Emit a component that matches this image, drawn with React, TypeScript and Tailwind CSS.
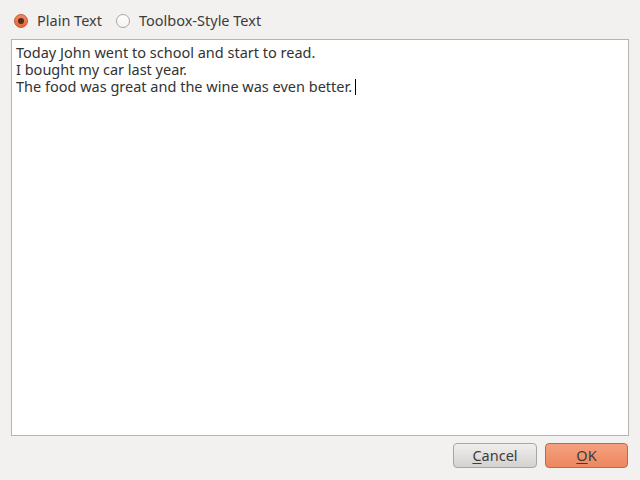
export default function App() {
  return (
    <div
      className="w-[640px] h-[480px] bg-[#f2f1f0] flex flex-col text-[14.5px] text-[#3c3c3c]"
      style={{ fontFamily: '"Noto Sans", "Open Sans", sans-serif' }}
    >
      <div className="flex items-center h-[39px] pl-[14px] pt-[3px]">
        <label className="flex items-center gap-[9px]">
          <span className="w-[14px] h-[14px] rounded-full border border-[#c9542e] bg-gradient-to-b from-[#f08a63] to-[#e0683f] flex items-center justify-center">
            <span className="w-[6px] h-[6px] rounded-full bg-[#5a2a1a]" />
          </span>
          <span>Plain Text</span>
        </label>
        <label className="flex items-center gap-[9px] ml-[14px]">
          <span className="w-[14px] h-[14px] rounded-full border border-[#a8a6a2] bg-gradient-to-b from-white to-[#f4f3f1]" />
          <span>Toolbox-Style Text</span>
        </label>
      </div>
      <div className="mx-[11px] h-[397px] border border-[#b6b4b0] bg-white px-[4px] pt-[4px] leading-[17px] text-[#333]">
        <div>Today John went to school and start to read.</div>
        <div>I bought my car last year.</div>
        <div className="flex items-center">
          The food was great and the wine was even better.
          <span className="ml-[3px] inline-block w-px h-[16px] bg-black" />
        </div>
      </div>
      <div className="flex justify-end gap-[8px] pr-[12px] pt-[7px]">
        <button className="w-[84px] h-[25px] rounded-[4px] border border-[#a8a6a2] bg-gradient-to-b from-[#f0efed] to-[#d4d2cf] text-[#3c3c3c]">
          <span className="underline underline-offset-2">C</span>ancel
        </button>
        <button className="w-[83px] h-[25px] rounded-[4px] border border-[#b86a4d] bg-gradient-to-b from-[#f4a27f] to-[#ed865e] text-[#3c3c3c]">
          <span className="underline underline-offset-2">O</span>K
        </button>
      </div>
    </div>
  );
}
